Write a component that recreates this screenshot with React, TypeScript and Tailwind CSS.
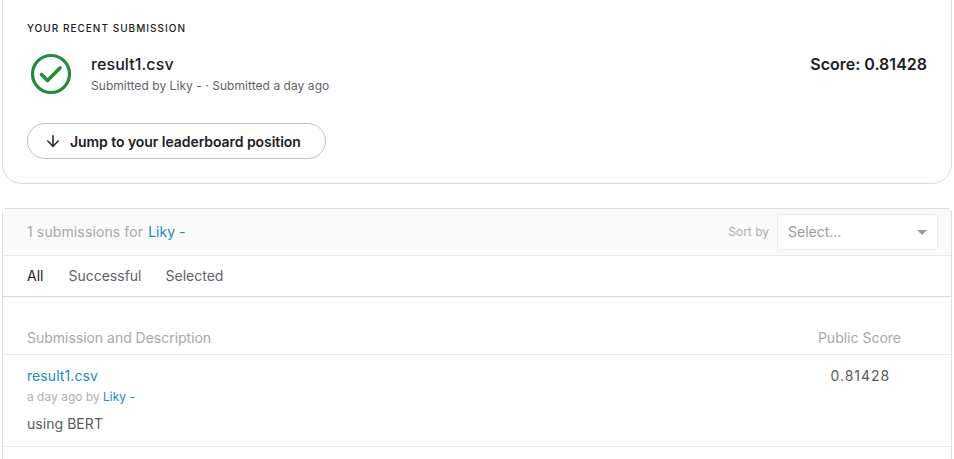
import { ArrowDown } from 'lucide-react'

function CheckBadge() {
  return (
    <svg width="42" height="42" viewBox="0 0 42 42" fill="none" className="shrink-0">
      <circle cx="21" cy="21" r="18.5" stroke="#1e8e3e" strokeWidth="3.2" />
      <path d="M11.5 21.5 L17.5 27.5 L30 15" stroke="#1e8e3e" strokeWidth="3.6" strokeLinecap="round" strokeLinejoin="round" />
    </svg>
  )
}

export default function App() {
  return (
    <div className="h-[459px] w-[954px] overflow-hidden bg-white font-['Inter',sans-serif] text-[#202124]">
      {/* recent submission */}
      <div className="mx-[2px] mt-[-20px] h-[204px] w-[950px] rounded-[20px] border border-[#dadce0] px-[24px] pt-[40px]">
        <div className="text-[10px] leading-[14px] font-medium tracking-[1.02px] text-[#202124]">YOUR RECENT SUBMISSION</div>
        <div className="mt-[19px] flex items-start">
          <div className="mt-[-1px] ml-[3px]"><CheckBadge /></div>
          <div className="ml-[19px] grow">
            <div className="text-[16px] leading-[20px] font-medium tracking-[0.08px]">result1.csv</div>
            <div className="mt-[4px] text-[12px] leading-[16px] tracking-[0.05px] text-[#5f6368]">Submitted by Liky - · Submitted a day ago</div>
          </div>
          <div className="text-[16px] leading-[20px] font-semibold">Score: 0.81428</div>
        </div>
        <button className="mt-[28px] flex h-[36px] w-[299px] items-center rounded-[18px] border border-[#bdc1c6] pl-[18px] text-[14px] font-semibold tracking-[-0.06px]">
          <ArrowDown size={18} strokeWidth={2} className="mr-[7px] -ml-[2px]" />
          <span className="ml-[1px]">Jump to your leaderboard position</span>
        </button>
      </div>

      {/* submissions list */}
      <div className="mx-[2px] mt-[24px] h-[300px] w-[950px] rounded-t-[4px] border border-[#e0e0e0]">
        <div className="flex h-[47px] items-center border-b border-[#e8eaed] bg-[#fafafa] pr-[13px] pl-[24px]">
          <span className="mt-[-2px] text-[14px] tracking-[0.12px] text-[#a8a8a8]">1 submissions for</span>
          <span className="mt-[-2px] ml-[5px] text-[14px] text-[#1c89c0]">Liky -</span>
          <span className="ml-auto text-[12px] text-[#aeaeae]">Sort by</span>
          <div className="ml-[8px] flex h-[36px] w-[161px] items-center justify-between rounded-[4px] border border-[#ececec] bg-white pr-[10px] pl-[10px] text-[14px] text-[#9a9a9a]">
            <span className="mt-[-2px]">Select...</span>
            <span className="h-0 w-0 border-x-[5px] border-t-[5px] border-x-transparent border-t-[#9a9a9a]" />
          </div>
        </div>
        <div className="flex h-[41px] items-center gap-[25px] border-b border-[#dadce0] pb-[1px] pl-[24px] text-[14px] text-[#5f6368]">
          <span className="text-[#202124]">All</span>
          <span>Successful</span>
          <span className="-ml-[1px]">Selected</span>
        </div>
        <div className="flex h-[58px] items-end justify-between border-b border-[#e8eaed] pr-[50px] pb-[6px] pl-[24px] text-[14px] text-[#a8a8a8]">
          <span className="tracking-[-0.02px]">Submission and Description</span>
          <span>Public Score</span>
        </div>
        <div className="flex h-[92px] justify-between border-b border-[#e8eaed] pr-[61px] pl-[24px]">
          <div>
            <div className="mt-[12px] text-[14px] leading-[18px] tracking-[0.08px] text-[#1c89c0]">result1.csv</div>
            <div className="mt-[4px] text-[12px] leading-[16px] text-[#aeaeae]">
              a day ago by <span className="text-[#1c89c0]">Liky -</span>
            </div>
            <div className="mt-[10px] text-[14px] leading-[18px] tracking-[0.05px] text-[#5a5a5a]">using BERT</div>
          </div>
          <div className="mt-[12px] text-[14px] leading-[18px] tracking-[0.95px] text-[#5a5a5a]">0.81428</div>
        </div>
      </div>
    </div>
  )
}
